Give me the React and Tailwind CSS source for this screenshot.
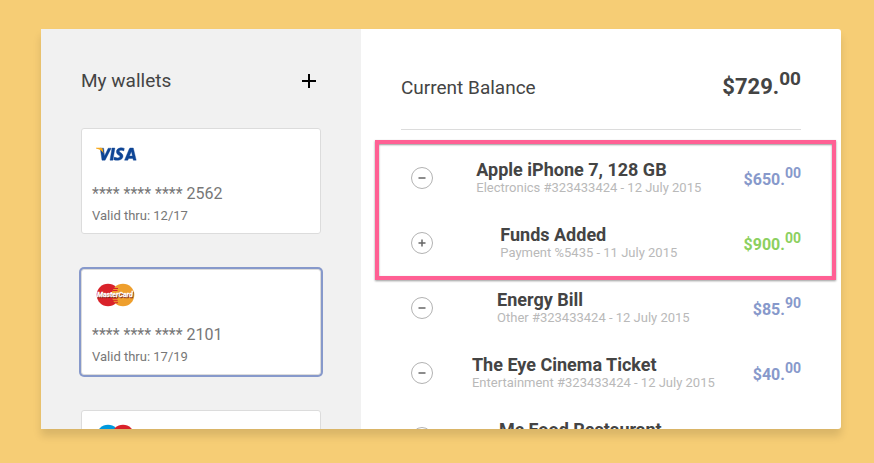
import React from "react";

const wallets = [
  { brand: "visa", digits: "2562", thru: "12/17", active: false },
  { brand: "mastercard", digits: "2101", thru: "17/19", active: true },
  { brand: "maestro", active: false },
];

const highlighted = [
  { kind: "out", title: "Apple iPhone 7, 128 GB", note: "Electronics #323433424 - 12 July 2015", whole: "$650.", cents: "00" },
  { kind: "in", title: "Funds Added", note: "Payment %5435 - 11 July 2015", whole: "$900.", cents: "00" },
];

const others = [
  { kind: "out", title: "Energy Bill", note: "Other #323433424 - 12 July 2015", whole: "$85.", cents: "90" },
  { kind: "out", title: "The Eye Cinema Ticket", note: "Entertainment #323433424 - 12 July 2015", whole: "$40.", cents: "00" },
  { kind: "out", title: "Mc Food Restaurant" },
];

function BrandLogo({ brand }) {
  if (brand === "visa") {
    return (
      <svg width="44" height="24" viewBox="0 0 44 24" role="img" aria-label="Visa">
        <g fill="#0e4595" stroke="#0e4595" strokeWidth="0.4">
          <path d="M5.2 6.2H8.6L9.5 14L13.2 6.2H16.2L10.1 18.2H7L5.2 6.2Z" />
          <path d="M17 6H19.9L17.9 18.2H15L17 6Z" />
          <path d="M29.3 6.4L28.8 8.9C27.5 8.2 24.4 7.8 24.4 9.3C24.4 10.7 28 11 28 14C28 18.4 22.2 19 18.8 17.7L19.3 15.1C21.2 16.2 24.9 16.4 24.9 14.6C24.9 13.1 21.4 12.9 21.4 9.8C21.4 5.8 26.5 5.2 29.3 6.4Z" />
          <path fillRule="evenodd" d="M35.3 6H38.3L41.2 18.2H38.3L38 16.4H33.6L32.8 18.2H29.5L34.2 7C34.5 6.3 34.8 6 35.3 6ZM36.4 9.4L34.5 14H37.4L36.4 9.4Z" />
        </g>
        <path d="M1 5.8H5.8C7.1 5.8 7.6 6.5 7.8 7.5L8.6 11.6C7.4 8.7 4.8 7 1 6.4Z" fill="#f7a81b" />
      </svg>
    );
  }
  if (brand === "mastercard") {
    return (
      <svg width="44" height="24" viewBox="0 0 44 24" role="img" aria-label="MasterCard">
        <circle cx="13" cy="12" r="11.3" fill="#d9222a" />
        <circle cx="28" cy="12" r="11.3" fill="#ee9f2d" />
        <path d="M18 5.5H23M17.5 7.5H22.5M17.3 15.7H22.3M17.7 17.7H22.7M19.5 19.7H23" stroke="#d9222a" />
        <text x="2.6" y="14.9" fontFamily="Roboto, sans-serif" fontSize="7" fontWeight="700" fontStyle="italic" fill="#7a1a12" stroke="#7a1a12" strokeWidth="0.3">MasterCard</text>
        <text x="2" y="14.3" fontFamily="Roboto, sans-serif" fontSize="7" fontWeight="700" fontStyle="italic" fill="#fff" stroke="#fff" strokeWidth="0.3">MasterCard</text>
      </svg>
    );
  }
  return (
    <svg width="44" height="24" viewBox="0 0 44 24" role="img" aria-label="Maestro">
      <circle cx="13" cy="12" r="11.3" fill="#0099dd" />
      <circle cx="28" cy="12" r="11.3" fill="#d9222a" />
    </svg>
  );
}

function WalletCard({ brand, digits, thru, active }) {
  return (
    <button
      type="button"
      aria-pressed={active}
      className={
        "flex h-[106px] w-full shrink-0 flex-col items-start rounded-[3px] border border-[#dcdcdc] bg-white px-[10px] pt-[13px] text-left text-[#777] " +
        (active ? "ring-2 ring-[#8799cb]" : "")
      }
    >
      <span className="ml-[3px] block h-6">
        <BrandLogo brand={brand} />
      </span>
      {digits && (
        <>
          <span className="mt-[17px] block text-base leading-[22px]">**** **** **** {digits}</span>
          <span className="mt-[2px] block text-[13px] leading-[18px]">Valid thru: {thru}</span>
        </>
      )}
    </button>
  );
}

function Transaction({ kind, title, note, whole, cents }) {
  const incoming = kind === "in";
  return (
    <li className="flex h-[65px] items-center justify-between">
      <svg className="ml-[10px]" width="23" height="23" viewBox="0 0 23 23" fill="none" aria-hidden="true">
        <circle cx="11" cy="11" r="10.5" stroke="#b2b2b2" />
        <path d={incoming ? "M7.5 11H14.5M11 7.5V14.5" : "M7.5 11H14.5"} stroke="#666" strokeWidth="1.5" />
      </svg>
      <div className="pb-[2px]">
        <h3 className="text-lg leading-5 font-bold text-[#444]">{title}</h3>
        <p className={"h-4 text-[13px] leading-4 text-[#b9b9b9] " + (note ? "" : "min-w-[189px]")}>{note}</p>
      </div>
      <p className={"min-w-12 pt-[2px] text-right text-base leading-6 font-bold " + (incoming ? "text-[#8cd05f]" : "text-[#8799cb]")}>
        {whole}
        <sup className="text-sm leading-none">{cents}</sup>
      </p>
    </li>
  );
}

export default function App() {
  return (
    <div className="h-screen bg-[#f6cd75] pt-[29px] pr-[33px] pb-[34px] pl-[41px] font-['Roboto',sans-serif]">
      <main className="flex h-full overflow-hidden rounded-r-[3px] bg-white shadow-[0_7px_8px_rgba(0,0,0,0.12)]">
        <aside className="w-2/5 shrink-0 bg-[#f1f1f1] px-10 pt-10">
          <div className="flex h-6 items-center justify-between">
            <h2 className="text-[19px] leading-6 text-[#444]">My wallets</h2>
            <button type="button" aria-label="Add wallet" className="flex size-6 items-center justify-center">
              <svg width="14" height="14" viewBox="0 0 14 14" aria-hidden="true">
                <path d="M0 7H14M7 0V14" stroke="#000" strokeWidth="2" />
              </svg>
            </button>
          </div>
          <div className="mt-[35px] flex flex-col gap-[35px]">
            {wallets.map((w) => (
              <WalletCard key={w.brand} {...w} />
            ))}
          </div>
        </aside>
        <section className="min-w-0 flex-1 px-10 pt-10">
          <div className="flex h-[61px] items-start justify-between border-b border-[#dcdcdc]">
            <h2 className="pt-[7px] text-[19px] leading-6 text-[#444]">Current Balance</h2>
            <p className="pt-[2px] text-[22px] leading-8 font-bold text-[#444]">
              $729.<sup className="text-[19px] leading-none">00</sup>
            </p>
          </div>
          <div className="relative pt-4">
            <ul>
              {highlighted.map((t) => (
                <Transaction key={t.title} {...t} />
              ))}
            </ul>
            <div className="pointer-events-none absolute -right-[35px] -left-[26px] top-[10px] h-[140px] border-4 border-[#ff6094] shadow-[0_1px_2px_rgba(0,0,0,0.4),inset_0_1px_2px_rgba(0,0,0,0.4)]" />
          </div>
          <ul>
            {others.map((t) => (
              <Transaction key={t.title} {...t} />
            ))}
          </ul>
        </section>
      </main>
    </div>
  );
}
